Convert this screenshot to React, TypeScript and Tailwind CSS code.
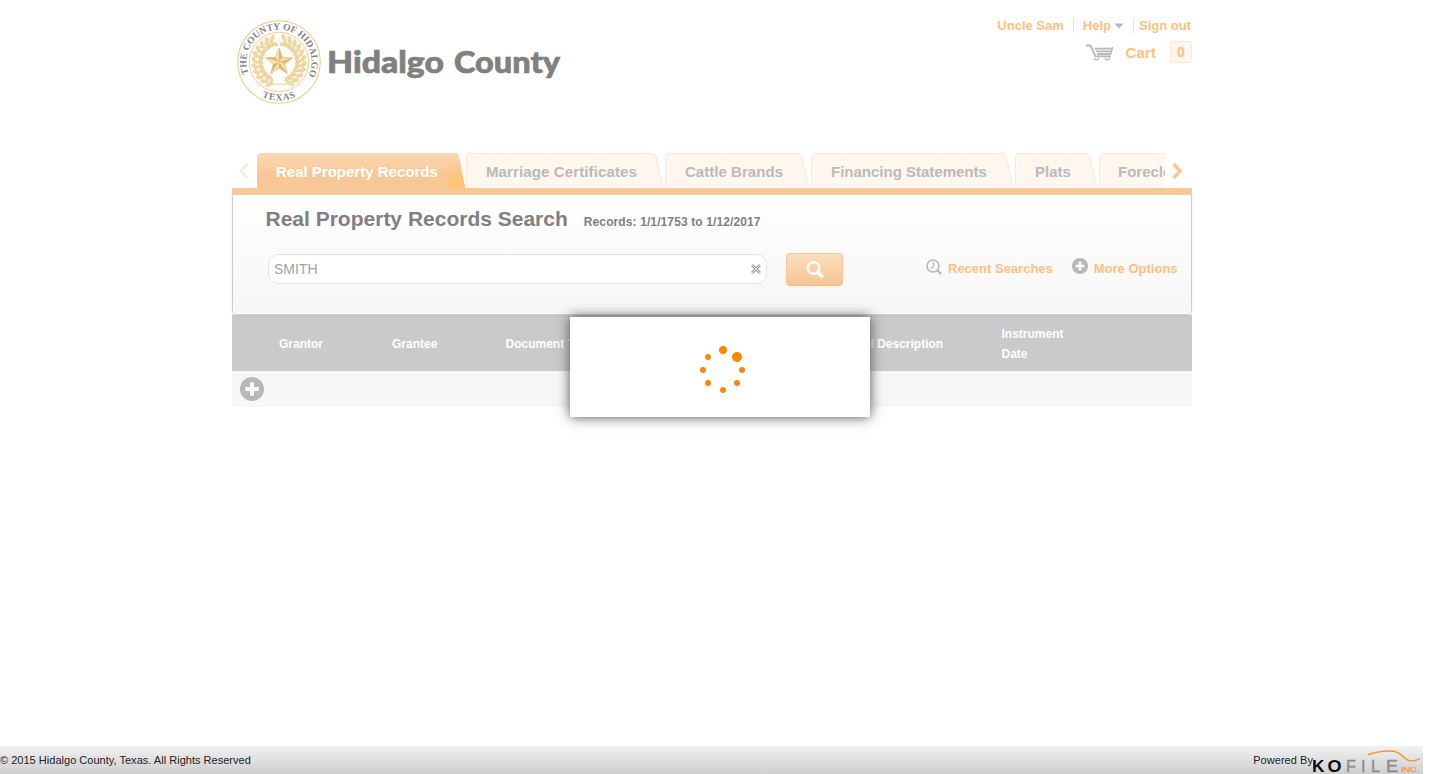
import React from "react";

const laurel = Array.from({ length: 11 }, (_, i) => 26 + i * 14);

function Seal() {
  return (
    <svg width="86" height="86" viewBox="0 0 86 86" className="block shrink-0">
      <defs>
        <path id="sealTop" d="M12.5 54.6 A32.6 32.6 0 1 1 73.5 54.6" />
        <path id="sealBottom" d="M11 64.5 A38.5 38.5 0 0 0 75 64.5" />
      </defs>
      <circle cx="43" cy="43" r="41.3" fill="none" stroke="#eccb88" strokeWidth="1.1" />
      <circle cx="43" cy="43" r="29.8" fill="none" stroke="#eccb88" strokeWidth="0.9" />
      <circle cx="43" cy="43" r="28.2" fill="none" stroke="#f6e6c4" strokeWidth="0.5" />
      <g fill="none" stroke="#ecca86" strokeWidth="0.9">
        <path d="M43 65 A21.5 21.5 0 0 1 34 23" />
        <path d="M43 65 A21.5 21.5 0 0 0 52 23" />
      </g>
      {laurel.map((a) => (
        <React.Fragment key={a}>
          {[a, -a].map((r) => (
            <g key={r} transform={`rotate(${r + 180} 43 43)`} fill="#f3dba8" stroke="#e2bc6e" strokeWidth="0.5">
              <ellipse cx="42" cy="18.6" rx="1.5" ry="3.6" transform={`rotate(${r > 0 ? 40 : -40} 42 18.6)`} />
              <ellipse cx="43" cy="24.4" rx="1.5" ry="3.4" transform={`rotate(${r > 0 ? 125 : -125} 43 24.4)`} />
            </g>
          ))}
        </React.Fragment>
      ))}
      <path d="M43 29 L46.5 38.4 L56.5 38.8 L48.7 45 L51.4 54.7 L43 49.1 L34.6 54.7 L37.3 45 L29.5 38.8 L39.5 38.4Z" fill="#f6e2b8" stroke="#e6c074" strokeWidth="0.8" />
      <path d="M43 43 L43 29 L46.5 38.4Z M43 43 L56.5 38.8 L48.7 45Z M43 43 L51.4 54.7 L43 49.1Z M43 43 L34.6 54.7 L37.3 45Z M43 43 L29.5 38.8 L39.5 38.4Z" fill="#e3b965" />
      <g fill="#858585" fontFamily="Liberation Serif, serif" fontWeight="bold">
        <text fontSize="9.6"><textPath href="#sealTop" startOffset="0" letterSpacing="0">THE COUNTY OF HIDALGO</textPath></text>
        <text fontSize="9.6"><textPath href="#sealBottom" startOffset="50%" textAnchor="middle" letterSpacing="0.7">TEXAS</textPath></text>
      </g>
    </svg>
  );
}

function Cart() {
  return (
    <svg width="28" height="17" viewBox="0 0 28 17" fill="none" stroke="#b9b9b9">
      <path d="M0 1.5H4.5L9.5 12.3H25" strokeWidth="1.8" />
      <path d="M8.5 4.7H27M9.7 7.4H26M11 10H25" strokeWidth="1.8" />
      <path d="M26.6 3L24.5 10.5" strokeWidth="1.4" />
      <path d="M8.5 13.8a2.1 2.1 0 0 0 4.2 0M19.2 13.8a2.1 2.1 0 0 0 4.2 0" strokeWidth="1.3" />
    </svg>
  );
}

function Plus({ size, bg }: { size: number; bg: string }) {
  return (
    <svg width={size} height={size} viewBox="0 0 24 24" className="block shrink-0">
      <circle cx="12" cy="12" r="12" fill="#b7b7b7" />
      <path d="M12 5.3V18.7M5.3 12H18.7" stroke={bg} strokeWidth="4" />
    </svg>
  );
}

function Tab({ label, width, active = false, left = 20, spacing = "" }: { label: string; width: number; active?: boolean; left?: number; spacing?: string }) {
  const w = width;
  const d = active
    ? `M0 35V4Q0 0 4 0H${w - 10}Q${w - 7} 0 ${w - 6} 3L${w} 35Z`
    : `M.5 34V4Q.5 .5 4 .5H${w - 12}Q${w - 9} .5 ${w - 8} 3.5L${w - 1} 34`;
  return (
    <div className="relative h-[35px] shrink-0" style={{ width: w, paddingLeft: left }}>
      <svg width={w} height="35" className="absolute left-0 top-0">
        <defs>
          <linearGradient id="tabFill" x1="0" y1="0" x2="0" y2="1">
            <stop offset="0" stopColor="#fbd8b2" />
            <stop offset="0.6" stopColor="#f7c896" />
            <stop offset="1" stopColor="#f7c896" />
          </linearGradient>
          <linearGradient id="tabEdge" x1="0" y1="0" x2="0" y2="1">
            <stop offset="0" stopColor="#fdc97c" stopOpacity="0" />
            <stop offset="0.85" stopColor="#fdc575" />
          </linearGradient>
        </defs>
        <path d={d} fill={active ? "url(#tabFill)" : "#fff6ee"} stroke={active ? "none" : "#ffe6cf"} />
        {active && <path d={`M${w - 17} 5H${w - 5.5}L${w} 35H${w - 17}Z`} fill="url(#tabEdge)" />}
      </svg>
      <span className={`relative block whitespace-nowrap text-[15px] font-bold leading-[37px] ${spacing} ${active ? "text-white" : "text-[#bababa]"}`}>{label}</span>
    </div>
  );
}

const dots = [
  [23, 5, 4], [37, 12, 5], [42, 25, 3], [37, 38, 3],
  [23, 45, 3], [8, 38, 3], [3, 25, 3], [8, 12, 3],
];

export default function App() {
  return (
    <div className="relative flex h-[774px] w-[1440px] flex-col overflow-hidden bg-white font-['Liberation_Sans',Arial,sans-serif]">
      <div className="ml-[232px] flex w-[960px] flex-1 flex-col">
        <header className="flex h-[153px] justify-between">
          <div className="flex pl-1 pt-[19px]">
            <Seal />
            <svg width="240" height="50" className="ml-[6px] mt-[18px]" fontFamily="Lato, sans-serif" fontWeight="900" fontSize="31" fill="#808080" stroke="#808080" strokeWidth="0.7">
              <text x="-1" y="36" textLength="117" lengthAdjust="spacingAndGlyphs">Hidalgo</text>
              <text x="126" y="36" textLength="106" lengthAdjust="spacingAndGlyphs">County</text>
            </svg>
          </div>
          <div className="flex flex-col items-end pt-[18px] font-bold text-[#ffc07f]">
            <nav className="flex h-[15px] text-[13px] leading-[15px]">
              <a className="pr-[9px]">Uncle Sam</a>
              <a className="flex items-center border-l border-[#e2e2e2] pl-[9px] pr-[9px]">
                Help
                <svg width="10" height="6" className="ml-[3px]"><path d="M0.5 0.5H9.5L5 5.5Z" fill="#b5b5b5" /></svg>
              </a>
              <a className="border-l border-[#e2e2e2] pl-[5px] pr-px">Sign out</a>
            </nav>
            <div className="mt-2 flex h-[22px] items-center text-[15px]">
              <Cart />
              <span className="ml-3 mt-[2px] tracking-[0.1px]">Cart</span>
              <span className="ml-[14px] flex h-[22px] w-[22px] items-center justify-center rounded-[3px] border border-[#ffe6cf] bg-[#fff6ee] text-[14px]">0</span>
            </div>
          </div>
        </header>

        <div className="flex h-[35px]">
          <svg width="25" height="35" className="shrink-0"><path d="M15.5 11L9 18L15.5 25" fill="none" stroke="#feead8" strokeWidth="3.2" /></svg>
          <div className="flex w-[908px] gap-px overflow-hidden">
            <Tab label="Real Property Records" width={208} active left={19} />
            <Tab label="Marriage Certificates" width={198} spacing="tracking-[0.12px]" />
            <Tab label="Cattle Brands" width={145} spacing="tracking-[0.04px]" />
            <Tab label="Financing Statements" width={203} />
            <Tab label="Plats" width={83} />
            <Tab label="Foreclosures" width={150} left={19} />
          </div>
          <svg width="27" height="35" className="shrink-0"><path d="M8.5 11L15 18L8.5 25" fill="none" stroke="#f9c694" strokeWidth="3.6" /></svg>
        </div>
        <div className="h-[7px] shrink-0 bg-[#f7c897]" />

        <section className="h-[120px] shrink-0 rounded-b-[5px] border border-t-0 border-[#cdcdcd] bg-linear-to-b from-white to-[#f6f6f6] pl-[33px] shadow-[0_1px_2px_#ddd,inset_0_-1px_0_white]">
          <div className="flex h-[58px] items-baseline pt-[8px]">
            <h1 className="-ml-[0.5px] text-[21px] font-bold leading-8 text-[#808080]">Real Property Records Search</h1>
            <span className="ml-4 text-[12px] font-bold tracking-[0.11px] text-[#808080]">Records: 1/1/1753 to 1/12/2017</span>
          </div>
          <div className="flex items-start">
            <div className="ml-[2px] mt-px flex h-[30px] w-[499px] shrink-0 items-center justify-between rounded-[10px] border border-[#e3e3e3] bg-white px-[5px] text-[14px] text-[#a3a3a3]">
              <span>SMITH</span>
              <svg width="10" height="10" viewBox="0 0 10 10"><path d="M1 1L9 9M9 1L1 9" stroke="#999" strokeWidth="2.6" /><path d="M1 1L9 9M9 1L1 9" stroke="#eee" strokeWidth="0.9" /></svg>
            </div>
            <button className="ml-[19px] flex h-[33px] w-[57px] shrink-0 items-center justify-center rounded-[4px] border border-[#fbc897] border-b-[#f2b98b] bg-linear-to-b from-[#fcdec0] to-[#f7c592]">
              <svg width="18" height="18" viewBox="0 0 18 18" fill="none" stroke="white"><circle cx="7.5" cy="7" r="5.8" strokeWidth="2.4" /><path d="M11.8 11.3L15.8 15.3" strokeWidth="3.6" strokeLinecap="round" /></svg>
            </button>
            <a className="ml-[83px] flex whitespace-nowrap text-[13px] font-bold leading-[31px] text-[#ffc07f]">
              <svg width="16" height="16" viewBox="0 0 16 16" className="mr-[6px] mt-[6px]" fill="none" stroke="#b7b7b7"><circle cx="7" cy="7" r="6" strokeWidth="1.6" /><path d="M11 11L15 15" strokeWidth="2.4" /><path d="M7.5 3V7.5L4.8 9.5" strokeWidth="1.2" /></svg>
              Recent Searches
            </a>
            <a className="ml-[19px] flex whitespace-nowrap text-[13px] font-bold leading-[31px] text-[#ffc07f]">
              <span className="mr-[6px] mt-[5px]"><Plus size={16} bg="#fcfcfc" /></span>
              More Options
            </a>
          </div>
        </section>

        <div className="flex h-[56px] shrink-0 items-center bg-[#c9cacb] pl-[47px] pt-px text-[12px] font-bold leading-5 text-white shadow-[inset_0_3px_3px_-2px_#bfc1c0]">
          <span className="w-[113px]">Grantor</span>
          <span className="w-[113.5px]">Grantee</span>
          <span className="w-[337px]">Document Type</span>
          <span className="w-[159px] whitespace-nowrap">Legal Description</span>
          <span className="w-[80px]">Instrument Date</span>
        </div>
        <div className="flex h-[36px] items-center bg-[#f7f7f7] pl-2">
          <Plus size={24} bg="#f7f7f7" />
        </div>
      </div>

      <footer className="flex h-[28px] w-[1423px] items-center justify-between bg-linear-to-b from-[#f1f1f1] to-[#cfcfcf] text-[11px] text-[#222]">
        <span className="tracking-[0.02px]">© 2015 Hidalgo County, Texas. All Rights Reserved</span>
        <div className="flex items-center">
          <span className="tracking-[0.05px]">Powered By</span>
          <svg width="110" height="28" fontFamily="Liberation Sans, sans-serif">
            <g fontSize="16" fontWeight="bold" fill="#0c0c0c"><text x="-1" y="26" textLength="12.5" lengthAdjust="spacingAndGlyphs">K</text><text x="14.5" y="26" textLength="14" lengthAdjust="spacingAndGlyphs">O</text></g>
            <g fontSize="16" fill="#8d8d8d" stroke="#8d8d8d" strokeWidth="0.4"><text x="33" y="26">F</text><text x="48" y="26">I</text><text x="58" y="26">L</text><text x="73" y="26" textLength="12" lengthAdjust="spacingAndGlyphs">E</text></g>
            <text x="88" y="26" fontSize="7" fill="#f59331" stroke="#f59331" strokeWidth="0.2" textLength="18" lengthAdjust="spacingAndGlyphs">INC.</text>
            <path d="M55 8.5C65 5.5 76 4.5 82 5.5C90 7.5 91 14 96.5 14.8C101 15.3 104 14.5 107 12.5" fill="none" stroke="#f59331" strokeWidth="1.4" />
          </svg>
        </div>
      </footer>

      <div className="absolute left-[570px] top-[317px] flex h-[100px] w-[300px] justify-center bg-white pl-[5px] pt-[28px] shadow-[0_0_12px_#554b48]">
        <svg width="46" height="50" fill="#ff8800">
          {dots.map(([x, y, r]) => <circle key={`${x}-${y}`} cx={x} cy={y} r={r} />)}
        </svg>
      </div>
    </div>
  );
}
